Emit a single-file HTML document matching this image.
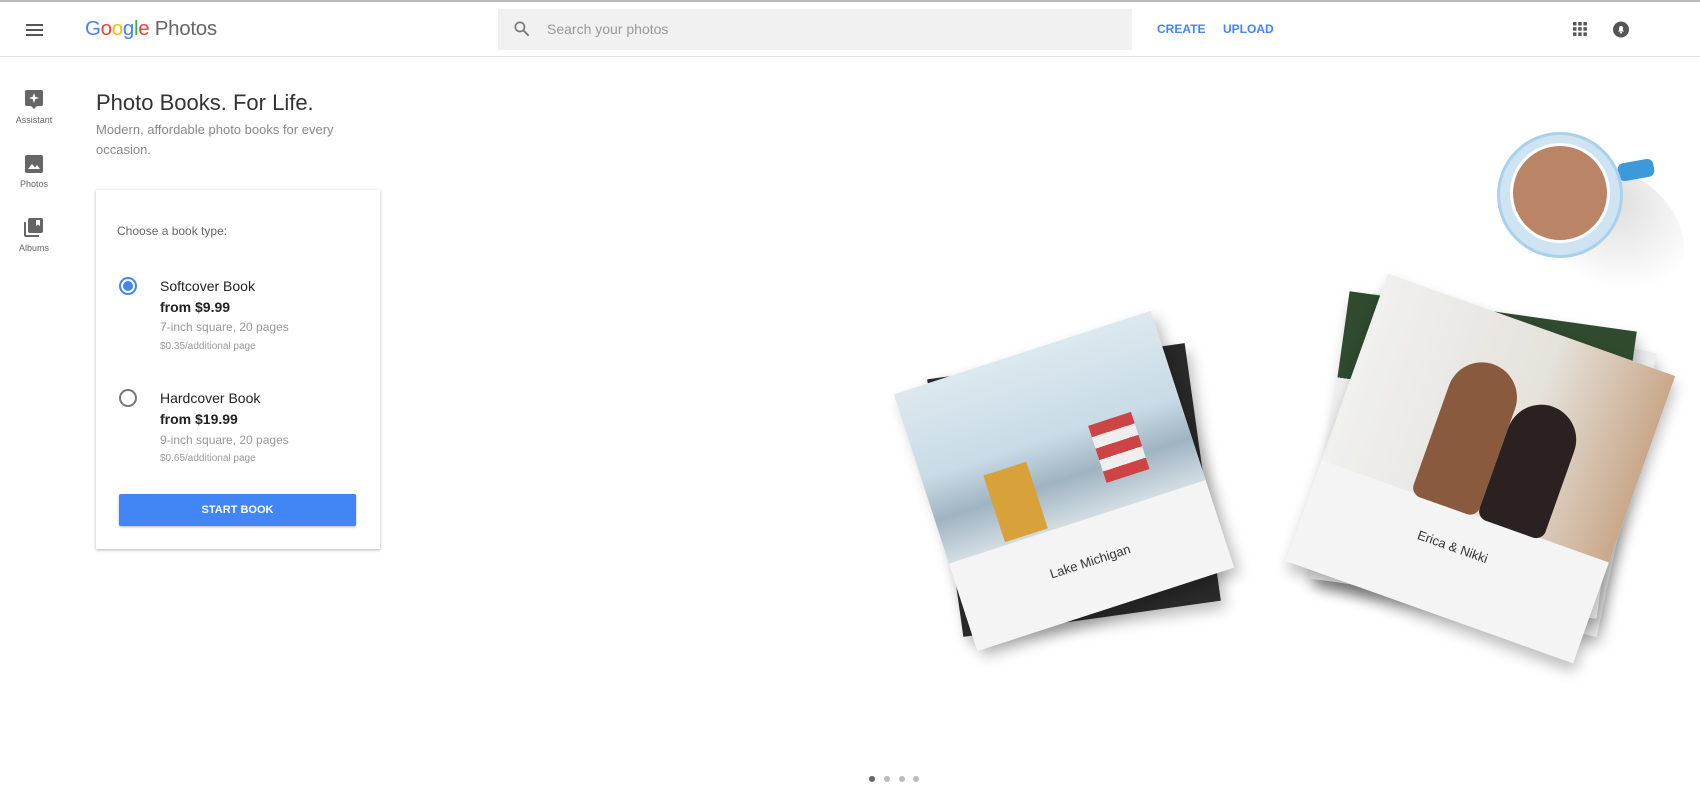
<!DOCTYPE html>
<html><head><meta charset="utf-8"><style>
*{margin:0;padding:0;box-sizing:border-box}
body{width:1700px;height:807px;overflow:hidden;background:#fff;font-family:"Liberation Sans",Arial,sans-serif;position:relative}
.abs{position:absolute}
.hdr{left:0;top:0;width:1700px;height:57px;border-top:2px solid #bbb;border-bottom:1px solid #e0e0e0}
.navlbl{font-size:9px;color:#666;width:68px;text-align:center;left:0}
.sub{color:#888;font-size:13px;line-height:20px}
.card{left:96px;top:190px;width:284px;height:359px;box-shadow:0 1px 3px rgba(0,0,0,.3);background:#fff}
.t1{font-size:14px;color:#222}
.t2{font-size:14px;color:#222;font-weight:bold}
.t3{font-size:12px;color:#999}
.t4{font-size:10px;color:#999}
.book{position:absolute;background:#f4f4f4;box-shadow:4px 8px 14px rgba(0,0,0,.25)}
</style></head><body>
<div class="abs hdr"></div>
<div class="abs" style="left:26px;top:24px;width:17px;height:2px;background:#555"></div>
<div class="abs" style="left:26px;top:29px;width:17px;height:2px;background:#555"></div>
<div class="abs" style="left:26px;top:34px;width:17px;height:2px;background:#555"></div>
<div class="abs" style="left:85px;top:17px;font-size:20.5px;letter-spacing:-0.3px"><span style="color:#4285f4">G</span><span style="color:#ea4335">o</span><span style="color:#fbbc05">o</span><span style="color:#4285f4">g</span><span style="color:#34a853">l</span><span style="color:#ea4335">e</span> <span style="color:#666">Photos</span></div>
<div class="abs" style="left:498px;top:9px;width:634px;height:41px;background:#f1f1f1"></div>
<svg class="abs" style="left:512px;top:19px" width="20" height="20" viewBox="0 0 24 24"><circle cx="9.5" cy="9.5" r="5.5" fill="none" stroke="#777" stroke-width="2"/><path d="M14 14l6 6" stroke="#777" stroke-width="2.2"/></svg>
<div class="abs" style="left:547px;top:21px;font-size:14px;color:#999">Search your photos</div>
<div class="abs" style="left:1157px;top:22px;font-size:12px;color:#4285f4;font-weight:bold">CREATE</div>
<div class="abs" style="left:1223px;top:22px;font-size:12px;color:#4285f4;font-weight:bold">UPLOAD</div>
<svg class="abs" style="left:1573px;top:22px" width="14" height="14" viewBox="0 0 14 14" fill="#555"><rect x="0" y="0" width="3.5" height="3.5"/><rect x="5.2" y="0" width="3.5" height="3.5"/><rect x="10.4" y="0" width="3.5" height="3.5"/><rect x="0" y="5.2" width="3.5" height="3.5"/><rect x="5.2" y="5.2" width="3.5" height="3.5"/><rect x="10.4" y="5.2" width="3.5" height="3.5"/><rect x="0" y="10.4" width="3.5" height="3.5"/><rect x="5.2" y="10.4" width="3.5" height="3.5"/><rect x="10.4" y="10.4" width="3.5" height="3.5"/></svg>
<svg class="abs" style="left:1613px;top:21px" width="16" height="17" viewBox="0 0 16 17"><circle cx="8" cy="8.5" r="8" fill="#555"/><path d="M5 10.5h6l-1-1.2V7a2 2 0 0 0-4 0v2.3z" fill="#fff"/><circle cx="8" cy="11.6" r="1" fill="#fff"/></svg>
<svg class="abs" style="left:25px;top:90px" width="18" height="19" viewBox="0 0 18 19"><path d="M2 0h14a2 2 0 0 1 2 2v12a2 2 0 0 1-2 2h-4l-3 3-3-3H2a2 2 0 0 1-2-2V2a2 2 0 0 1 2-2z" fill="#666"/><path d="M9 3l1.3 3.7L14 8l-3.7 1.3L9 13l-1.3-3.7L4 8l3.7-1.3z" fill="#fff"/></svg>
<div class="abs navlbl" style="top:115px">Assistant</div>
<svg class="abs" style="left:25px;top:155px" width="18" height="18" viewBox="0 0 18 18"><rect width="18" height="18" rx="2" fill="#666"/><path d="M3 14l4-5 3 3.5 2-2.5 3 4z" fill="#fff"/></svg>
<div class="abs navlbl" style="top:179px">Photos</div>
<svg class="abs" style="left:24px;top:218px" width="19" height="19" viewBox="0 0 19 19"><path d="M0 4v13a2 2 0 0 0 2 2h13v-2H2V4z" fill="#666"/><rect x="4" y="0" width="15" height="15" rx="2" fill="#666"/><path d="M12 2h4v6l-2-1.5-2 1.5z" fill="#fff"/></svg>
<div class="abs navlbl" style="top:243px">Albums</div>
<div class="abs" style="left:96px;top:90px;font-size:22px;color:#333">Photo Books. For Life.</div>
<div class="abs sub" style="left:96px;top:120px;width:260px">Modern, affordable photo books for every occasion.</div>
<div class="abs card">
 <div class="abs" style="left:21px;top:34px;font-size:12px;color:#666">Choose a book type:</div>
 <div class="abs" style="left:23px;top:87px;width:18px;height:18px;border:2px solid #4285f4;border-radius:50%"></div>
 <div class="abs" style="left:27px;top:91px;width:10px;height:10px;background:#4285f4;border-radius:50%"></div>
 <div class="abs t1" style="left:64px;top:88px">Softcover Book</div>
 <div class="abs t2" style="left:64px;top:109px">from $9.99</div>
 <div class="abs t3" style="left:64px;top:130px">7-inch square, 20 pages</div>
 <div class="abs t4" style="left:64px;top:151px">$0.35/additional page</div>
 <div class="abs" style="left:23px;top:199px;width:18px;height:18px;border:2px solid #777;border-radius:50%"></div>
 <div class="abs t1" style="left:64px;top:200px">Hardcover Book</div>
 <div class="abs t2" style="left:64px;top:221px">from $19.99</div>
 <div class="abs t3" style="left:64px;top:243px">9-inch square, 20 pages</div>
 <div class="abs t4" style="left:64px;top:263px">$0.65/additional page</div>
 <div class="abs" style="left:23px;top:304px;width:237px;height:32px;background:#4285f4;border-radius:2px;box-shadow:0 1px 2px rgba(0,0,0,.3);color:#fff;font-size:11px;font-weight:bold;text-align:center;line-height:32px">START BOOK</div>
</div>
<div class="abs" style="left:1540px;top:175px;width:150px;height:120px;border-radius:50%;background:radial-gradient(ellipse at 30% 30%,rgba(0,0,0,.14),rgba(0,0,0,0) 70%);transform:rotate(40deg)"></div>
<div class="abs" style="left:1618px;top:161px;width:36px;height:18px;background:#3d9ad8;border-radius:6px;transform:rotate(-10deg)"></div>
<div class="abs" style="left:1497px;top:132px;width:126px;height:126px;border-radius:50%;background:#cfe4f3;border:3px solid #a9d0ec"></div>
<div class="abs" style="left:1510px;top:143px;width:100px;height:100px;border-radius:50%;background:#b98566;border:3px solid #fff"></div>
<div class="book" style="left:944px;top:360px;width:260px;height:260px;background:#2a2a2a;transform:rotate(-8deg)"></div>
<div class="book" style="left:929px;top:346px;width:270px;height:270px;transform:rotate(-18deg);overflow:hidden">
 <div style="position:absolute;left:0;top:0;width:100%;height:66%;background:linear-gradient(180deg,#dde8ef 0%,#c9dbe6 50%,#9fb4c1 75%,#d3dde3 100%)"></div>
 <div style="position:absolute;left:60px;top:105px;width:45px;height:70px;background:#d9a13a"></div>
 <div style="position:absolute;left:175px;top:90px;width:45px;height:60px;background:linear-gradient(#c44 0 20%,#eee 20% 40%,#c44 40% 60%,#eee 60% 80%,#c44 80%)"></div>
 <div style="position:absolute;left:0;top:212px;width:100%;text-align:center;font-size:13px;color:#333">Lake Michigan</div>
</div>
<div class="book" style="left:1340px;top:320px;width:290px;height:290px;background:#eee;transform:rotate(12deg)"></div>
<div class="book" style="left:1328px;top:310px;width:290px;height:290px;background:linear-gradient(180deg,#2f4a2f 0 30%,#eee 30%);transform:rotate(8deg)"></div>
<div class="book" style="left:1328px;top:316px;width:305px;height:305px;transform:rotate(19.6deg);overflow:hidden">
 <div style="position:absolute;left:0;top:0;width:100%;height:65%;background:linear-gradient(90deg,#f0f0ee,#e6e2dc 60%,#c9a88a)"></div>
 <div style="position:absolute;left:95px;top:50px;width:70px;height:150px;background:#8a5a3e;border-radius:35px 35px 10px 10px"></div>
 <div style="position:absolute;left:165px;top:70px;width:70px;height:130px;background:#2a2220;border-radius:35px 35px 10px 10px"></div>
 <div style="position:absolute;left:0;top:228px;width:100%;text-align:center;font-size:13px;color:#333">Erica &amp; Nikki</div>
</div>
<div class="abs" style="left:869px;top:776px;width:6px;height:6px;border-radius:50%;background:#666"></div>
<div class="abs" style="left:884px;top:776px;width:6px;height:6px;border-radius:50%;background:#bbb"></div>
<div class="abs" style="left:899px;top:776px;width:6px;height:6px;border-radius:50%;background:#bbb"></div>
<div class="abs" style="left:913px;top:776px;width:6px;height:6px;border-radius:50%;background:#bbb"></div>
</body></html>
